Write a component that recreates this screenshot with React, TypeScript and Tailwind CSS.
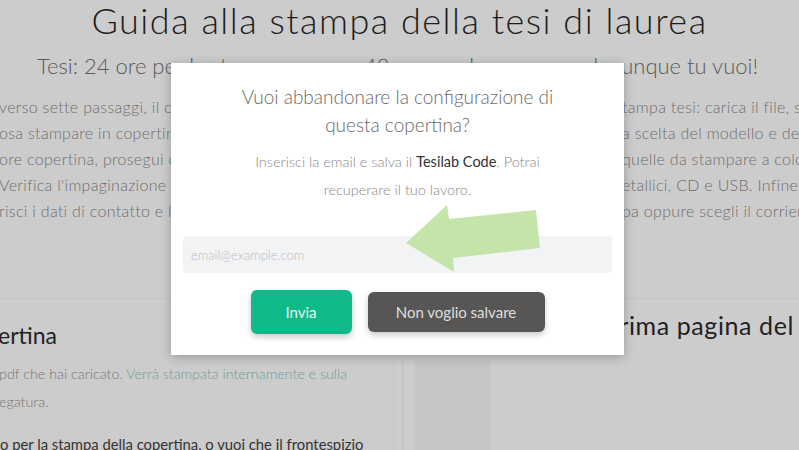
import type { ReactNode } from "react";

/** Intro paragraph, split where the dialog covers the middle of each line. */
const INTRO: [string, string][] = [
  ["verso sette passaggi, il configuratore ti guida nella s", "tampa tesi: carica il file, scegli il formato"],
  ["osa stampare in copertina e personalizzala partendo dall", "a scelta del modello e dei colori"],
  ["ore copertina, prosegui con le pagine interne e indica", "quelle da stampare a colori"],
  ["Verifica l'impaginazione scegli gli accessori, i dettagli m", "etallici, CD e USB. Infine"],
  ["risci i dati di contatto e le modalità di spedizione in tutta Euro", "pa oppure scegli il corriere"],
];

function IntroLine({ left, right }: { left: string; right: string }) {
  return (
    <div className="grid grid-cols-[622px_1fr] whitespace-nowrap">
      <span className="-ml-[1px] overflow-hidden">{left}</span>
      <span>{right}</span>
    </div>
  );
}

function Page() {
  return (
    <main>
      <h1 className="text-center text-[36px] font-light leading-[40px] tracking-[1.5px] text-[#1c1c1c]">
        Guida alla stampa della tesi di laurea
      </h1>
      <div className="mt-[12px] flex justify-between whitespace-nowrap pl-[37px] pr-[41px] text-[22px] font-light leading-[28px] text-[#5a5a5a]">
        <span>Tesi: 24 ore per la stampa,</span>
        <span>e 48 ore per la consegna dovunque tu vuoi!</span>
      </div>
      <div className="mt-[14px] text-[16px] font-light leading-[26px] tracking-[0.3px] text-[#6c6c6c]">
        {INTRO.map(([l, r], i) => (
          <IntroLine key={i} left={l} right={r} />
        ))}
      </div>

      <div className="mt-[74px] grid grid-cols-[394px_1fr] gap-[8px] border-t border-[#c4c4c4]">
        {/* Left column: cover */}
        <section className="h-[160px] border-r border-[#c6c6c6] pt-[20px]">
          <h2 className="-ml-[2px] whitespace-nowrap text-[23px] leading-[32px] text-[#222]">ertina</h2>
          <p className="-ml-[1px] mt-[9px] whitespace-nowrap text-[14.3px] font-light leading-[28px] text-[#767676]">
            pdf che hai caricato. <span className="text-[#6f9f93]">Verrà stampata internamente e sulla</span>
            <br />
            egatura.
          </p>
          <p className="mt-[14px] whitespace-nowrap text-[14.8px] leading-[28px] text-[#333]">
            o per la stampa della copertina, o vuoi che il frontespizio
          </p>
        </section>

        {/* Right column: first page */}
        <section className="h-[160px] border-l border-[#c2c2c2] pl-[12px] pt-[10px]">
          <h2 className="ml-[8px] whitespace-nowrap text-[25px] leading-[32px] tracking-[0.6px] text-[#222]">
            Frontespizio: la prima pagina del libro
          </h2>
          <div className="mt-[19px] h-[120px] w-[76px] bg-[#c5c6c8]" />
        </section>
      </div>
    </main>
  );
}

function Button({ children, className }: { children: ReactNode; className: string }) {
  return (
    <button
      type="button"
      className={`rounded-[6px] text-[15px] shadow-[0_3px_6px_rgba(0,0,0,0.22)] ${className}`}
    >
      {children}
    </button>
  );
}

function SaveDialog() {
  return (
    <div className="absolute inset-0 flex justify-center pr-[4px] pt-[63px]">
      <div className="relative h-[292px] w-[453px] bg-white px-[12px] pt-[20px] shadow-[0_2px_10px_rgba(0,0,0,0.25)]">
        <h3 className="text-center text-[19px] font-light leading-[28px] text-[#6a6a6a]">
          Vuoi abbandonare la configurazione di
          <br />
          questa copertina?
        </h3>
        <p className="mt-[9px] text-center text-[14.5px] font-light leading-[28px] text-[#888]">
          <span>
            Inserisci la email e salva il <strong className="font-normal text-[#333]">Tesilab Code</strong>. Potrai
          </span>
          <br />
          <span>recuperare il tuo lavoro.</span>
        </p>
        <input
          type="email"
          placeholder="email@example.com"
          className="mt-[32px] block h-[37px] w-full rounded-[4px] bg-[#f2f3f5] px-[8px] text-[13px] font-light outline-none placeholder:text-[#bdbdbd]"
        />
        <div className="mt-[17px] flex items-center justify-center gap-[16px]">
          <Button className="h-[44px] w-[101px] bg-[#10b98a] text-[#eaf8f2]">Invia</Button>
          <Button className="h-[40px] w-[177px] bg-[#575655] text-[#dedede]">Non voglio salvare</Button>
        </div>

        {/* hint arrow pointing at the email field */}
        <svg
          className="pointer-events-none absolute left-0 top-0"
          width="453"
          height="292"
          viewBox="0 0 453 292"
          aria-hidden
        >
          <polygon points="235,180 276,142 278,156 365,147 369,185 282,195 283,209" fill="#c5e4aa" />
        </svg>
      </div>
    </div>
  );
}

export default function App() {
  return (
    <div className="relative h-[450px] w-[799px] overflow-hidden bg-[#cccccc] font-['Lato',sans-serif]">
      <Page />
      <SaveDialog />
    </div>
  );
}
